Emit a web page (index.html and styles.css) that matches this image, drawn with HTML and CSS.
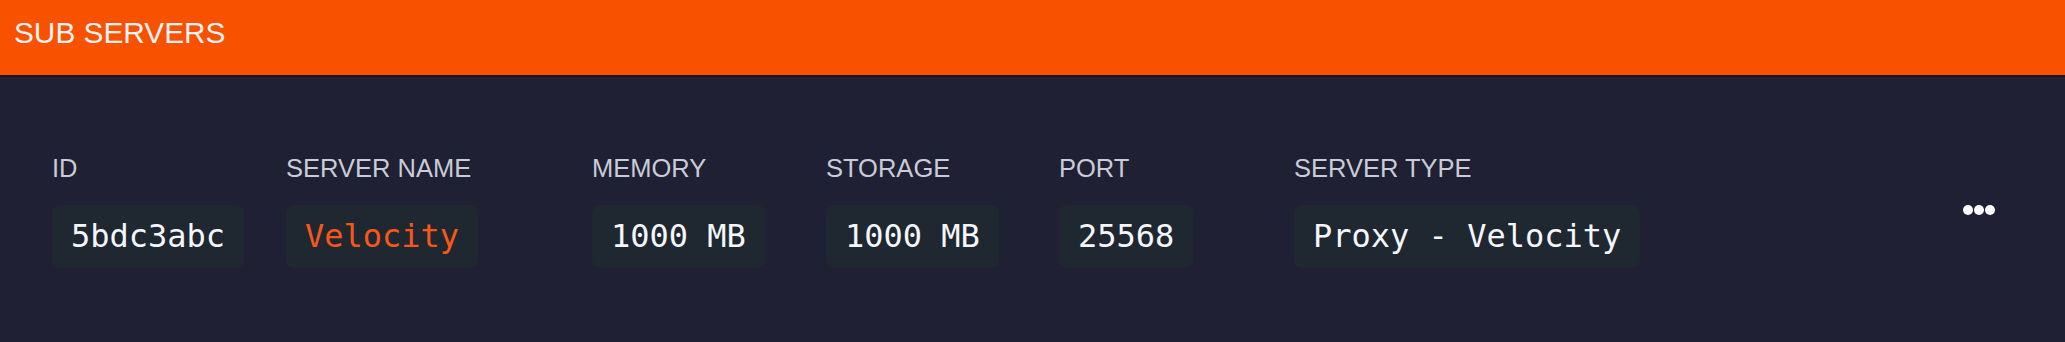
FILE: index.html
```html
<!DOCTYPE html>
<html lang="en">
<head>
<meta charset="utf-8">
<title>Sub Servers</title>
<link rel="stylesheet" href="styles.css">
</head>
<body>
<div class="panel">
  <header class="panel-head">SUB SERVERS</header>
  <section class="panel-body">
    <div class="row">
      <div class="field">
        <div class="label">ID</div>
        <div class="value">5bdc3abc</div>
      </div>
      <div class="field">
        <div class="label">SERVER NAME</div>
        <div class="value accent">Velocity</div>
      </div>
      <div class="field">
        <div class="label">MEMORY</div>
        <div class="value">1000 MB</div>
      </div>
      <div class="field">
        <div class="label">STORAGE</div>
        <div class="value">1000 MB</div>
      </div>
      <div class="field">
        <div class="label">PORT</div>
        <div class="value">25568</div>
      </div>
      <div class="field">
        <div class="label">SERVER TYPE</div>
        <div class="value">Proxy - Velocity</div>
      </div>
      <button class="more" aria-label="More">
        <svg width="32" height="10" viewBox="0 0 32 10"><circle cx="5" cy="5" r="5" fill="#fff"/><circle cx="16" cy="5" r="5" fill="#fff"/><circle cx="27" cy="5" r="5" fill="#fff"/></svg>
      </button>
    </div>
  </section>
</div>
</body>
</html>
```

FILE: styles.css
```css
* { box-sizing: border-box; }
html, body { margin: 0; padding: 0; }
body {
  background: #1f2033;
  width: 2065px;
  height: 342px;
  overflow: hidden;
}
.panel-head {
  background: #f85100;
  color: #f3f3f6;
  font-family: "Liberation Sans", Arial, sans-serif;
  font-size: 29.8px;
  line-height: 29px;
  padding: 18px 14px 28px;
  height: 77px;
  border-bottom: 2px solid #141419;
}
.panel-body {
  background: #1f2033;
  padding: 79px 70px 0 52px;
}
.row {
  display: grid;
  grid-template-columns: 234px 306px 234px 233px 235px 1fr auto;
  align-items: center;
}
.field {
  display: flex;
  flex-direction: column;
  align-items: flex-start;
  gap: 23px;
}
.label {
  font-family: "Liberation Sans", Arial, sans-serif;
  font-size: 25.5px;
  line-height: 1;
  color: #c9ccd8;
}
.value {
  background: #1f2730;
  border-radius: 8px;
  font-family: "DejaVu Sans Mono", "Liberation Mono", monospace;
  font-size: 32px;
  line-height: 63px;
  height: 63px;
  padding: 0 19px;
  color: #f4f6fa;
  white-space: nowrap;
}
.value.accent { color: #f9571a; }
.more {
  background: none;
  border: 0;
  padding: 0;
  margin: -4px 0 0 0;
  display: flex;
}
```
